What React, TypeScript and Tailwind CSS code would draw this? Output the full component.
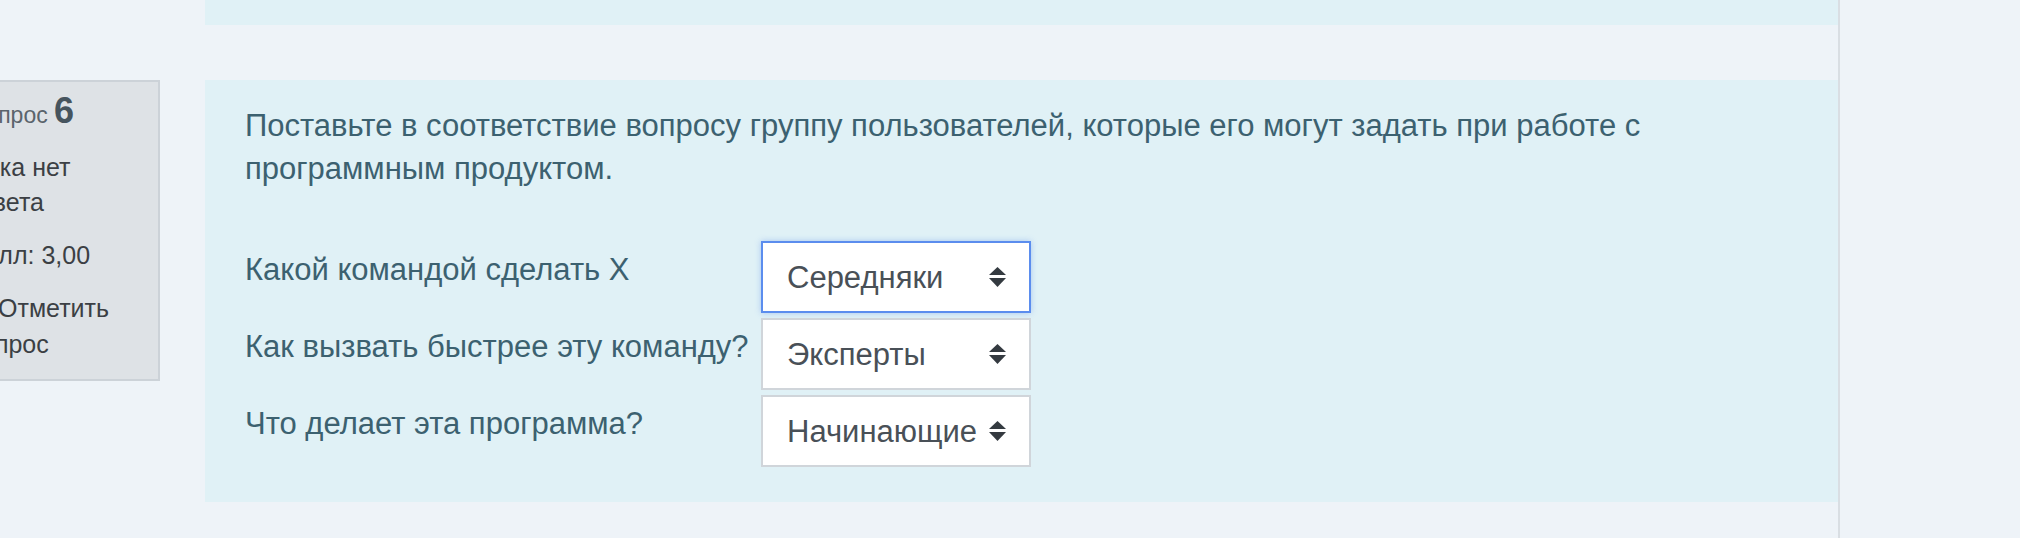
import React from "react";

const options = [
  { label: "Какой командой сделать X", value: "Середняки", focused: true },
  { label: "Как вызвать быстрее эту команду?", value: "Эксперты", focused: false },
  { label: "Что делает эта программа?", value: "Начинающие", focused: false },
];

function SortArrows() {
  return (
    <svg width="17" height="20" viewBox="0 0 17 20" className="shrink-0">
      <path d="M0 8 L8.5 0 L17 8 Z" fill="#343a40" />
      <path d="M0 11 L17 11 L8.5 20 Z" fill="#343a40" />
    </svg>
  );
}

function FlagIcon() {
  return (
    <svg width="20" height="22" viewBox="0 0 20 22" className="inline-block mr-[10px] align-[-3px]">
      <path d="M2 1 V21" stroke="#3b3f44" strokeWidth="2" />
      <path d="M3 2 H17 L14 7 L17 12 H3 Z" fill="none" stroke="#3b3f44" strokeWidth="2" />
    </svg>
  );
}

function FakeSelect({ value, focused }: { value: string; focused: boolean }) {
  return (
    <div
      className={
        focused
          ? "h-[72px] bg-white border-2 border-[#5b8dee] shadow-[0_0_6px_rgba(91,141,238,0.4)] flex items-center justify-between pl-[24px] pr-[23px]"
          : "h-[72px] bg-white border-2 border-[#d0d5da] flex items-center justify-between pl-[24px] pr-[23px]"
      }
    >
      <span className="text-[31px] leading-[43px] text-[#495057]">{value}</span>
      <SortArrows />
    </div>
  );
}

export default function App() {
  return (
    <div className="w-[2020px] h-[538px] overflow-hidden bg-[#eef3f8] flex font-['Liberation_Sans',Arial,sans-serif]">
      <div className="w-[1840px] shrink-0 border-r-2 border-[#d9dee3] flex flex-col">
        {/* tail of the previous question */}
        <div className="ml-[205px] h-[25px] bg-[#e0f1f6]" />

        <div className="mt-[55px] flex items-start">
          {/* question info */}
          <div className="w-[202px] -ml-[42px] shrink-0 border-2 border-[#ccd2d8] bg-[#dee2e6] pl-[8px] pr-[20px] pt-[11px] pb-[17px] text-[25px] text-[#3b3f44]">
            <h3 className="pl-[2px] text-[23px] leading-[36px] text-[#5a646c]">
              Вопрос <span className="text-[36px] leading-[36px] font-bold text-[#46545e]">6</span>
            </h3>
            <div className="mt-[17px] leading-[35px]">Пока нет ответа</div>
            <div className="mt-[18px] leading-[35px]">Балл: 3,00</div>
            <div className="mt-[17px] leading-[36px]">
              <FlagIcon />
              Отметить вопрос
            </div>
          </div>

          {/* formulation */}
          <div className="ml-[45px] flex-1 bg-[#e0f1f6] pl-[40px] pr-[40px] pt-[24px] pb-[35px] text-[#3c6170]">
            <p className="text-[31px] leading-[43px]">
              Поставьте в соответствие вопросу группу пользователей, которые его могут задать при работе с
              программным продуктом.
            </p>
            <div className="mt-[51px] grid grid-cols-[516px_270px] gap-y-[5px]">
              {options.map((o) => (
                <React.Fragment key={o.label}>
                  <div className="pt-[7px] text-[31px] leading-[43px] whitespace-nowrap">{o.label}</div>
                  <FakeSelect value={o.value} focused={o.focused} />
                </React.Fragment>
              ))}
            </div>
          </div>
        </div>
      </div>
      <div className="flex-1" />
    </div>
  );
}
